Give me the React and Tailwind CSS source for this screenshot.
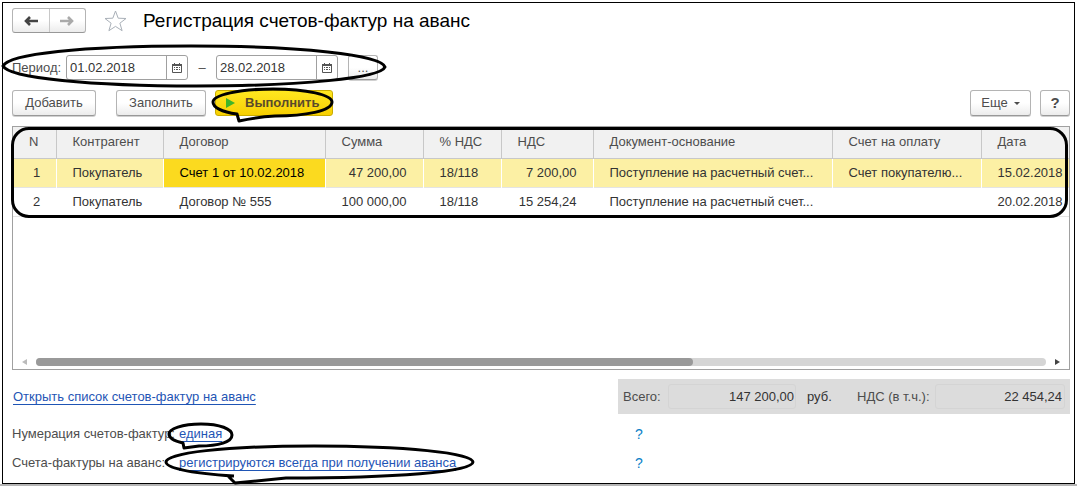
import { useState } from "react";
import clsx from "clsx";

const ROWS = [
  {
    n: 1,
    partner: "Покупатель",
    contract: "Счет 1 от 10.02.2018",
    sum: "47 200,00",
    rate: "18/118",
    vat: "7 200,00",
    base: "Поступление на расчетный счет...",
    invoice: "Счет покупателю...",
    date: "15.02.2018",
  },
  {
    n: 2,
    partner: "Покупатель",
    contract: "Договор № 555",
    sum: "100 000,00",
    rate: "18/118",
    vat: "15 254,24",
    base: "Поступление на расчетный счет...",
    invoice: "",
    date: "20.02.2018",
  },
];

const COLUMNS = [
  { key: "n", title: "N", width: "w-[43px]", align: "text-left" },
  { key: "partner", title: "Контрагент", width: "w-[107px]", align: "text-left" },
  { key: "contract", title: "Договор", width: "w-[162px]", align: "text-left" },
  { key: "sum", title: "Сумма", width: "w-[98px]", align: "text-right" },
  { key: "rate", title: "% НДС", width: "w-[78px]", align: "text-left" },
  { key: "vat", title: "НДС", width: "w-[92px]", align: "text-right" },
  { key: "base", title: "Документ-основание", width: "", align: "text-left" },
  { key: "invoice", title: "Счет на оплату", width: "w-[149px]", align: "text-left" },
  { key: "date", title: "Дата", width: "w-[88px]", align: "text-left" },
];

const buttonClass =
  "flex items-center justify-center rounded-[3px] border border-[#b4b4b4] border-b-[#989898] bg-gradient-to-b from-white from-50% to-[#ececec] text-[#4d4d4d] shadow-[0_1px_0_#d0d0d0]";

const Arrow = ({ className }) => (
  <svg width="14" height="10" viewBox="0 0 14 10" className={className} aria-hidden="true">
    <path d="M14 5H2M6 1L2 5l4 4" fill="none" stroke="currentColor" strokeWidth="2.6" />
  </svg>
);

const CalendarIcon = () => (
  <svg width="10" height="10" viewBox="0 0 10 10" aria-hidden="true">
    <path d="M0.5 1.5h9v8h-9z" fill="#fff" stroke="#555" />
    <path d="M0 1h10v2H0zM2 0h1v1H2zM7 0h1v1H7z" fill="#555" />
    <path
      d="M2 4h1v1H2zM4 4h2v1H4zM7 4h1v1H7zM2 6h1v1H2zM4 6h2v1H4zM7 6h1v1H7z"
      fill="#555"
    />
  </svg>
);

const Callout = ({ className, width, height, d }) => (
  <svg
    width={width}
    height={height}
    viewBox={`0 0 ${width} ${height}`}
    className={clsx("pointer-events-none absolute z-10 max-w-none", className)}
    aria-hidden="true"
  >
    <path d={d} fill="none" stroke="#000" strokeWidth="3" strokeLinejoin="round" />
  </svg>
);

const DateField = ({ label, value, onChange }) => (
  <div className="flex h-[25px] w-[122px] rounded-[3px] border border-[#a0a0a0] bg-white">
    <input
      type="text"
      aria-label={label}
      value={value}
      onChange={(e) => onChange(e.target.value)}
      className="min-w-0 flex-1 bg-transparent pl-[3px] text-[#333] outline-none"
    />
    <button
      type="button"
      aria-label="Выбрать дату"
      className="flex w-[21px] items-center justify-center border-l border-[#a0a0a0]"
    >
      <CalendarIcon />
    </button>
  </div>
);

const Header = () => (
  <header className="flex h-[25px] items-center">
    <div className="flex h-[25px] w-[74px] rounded-[3px] border border-[#b4b4b4] border-b-[#989898] bg-gradient-to-b from-white from-50% to-[#ececec]">
      <button
        type="button"
        aria-label="Назад"
        className="flex flex-1 items-center justify-center border-r border-[#c8c8c8] text-[#444]"
      >
        <Arrow />
      </button>
      <button
        type="button"
        aria-label="Вперед"
        className="flex flex-1 items-center justify-center text-[#aaa]"
      >
        <Arrow className="rotate-180" />
      </button>
    </div>
    <button type="button" aria-label="В избранное" className="ml-[18px]">
      <svg width="23" height="22" viewBox="0 0 23 22" aria-hidden="true">
        <path
          d="M11.5 1 L14.2 8.2 L22 8.5 L15.9 13.2 L18.1 20.7 L11.5 16.4 L4.9 20.7 L7.1 13.2 L1 8.5 L8.8 8.2 Z"
          fill="#fff"
          stroke="#a9b0b8"
        />
      </svg>
    </button>
    <h1 className="ml-4 text-[19px] leading-6 text-black">Регистрация счетов-фактур на аванс</h1>
  </header>
);

const Period = () => {
  const [from, setFrom] = useState("01.02.2018");
  const [to, setTo] = useState("28.02.2018");

  return (
    <div className="relative mt-[22px] flex h-[25px] items-center">
      <span className="w-[54px]">Период:</span>
      <DateField label="Начало периода" value={from} onChange={setFrom} />
      <span className="w-7 text-center">–</span>
      <DateField label="Конец периода" value={to} onChange={setTo} />
      <button type="button" className={clsx(buttonClass, "ml-[10px] h-[25px] w-[30px]")}>
        ...
      </button>
      <Callout
        className="-left-[11px] -top-[11px]"
        width={386}
        height={44}
        d="M2 22 C8 10 80 2 190 2 C300 2 380 11 384 23 C380 34 300 42 195 42 C90 42 8 34 2 22 Z"
      />
    </div>
  );
};

const Commands = () => (
  <div className="mt-[10px] flex h-[26px] items-stretch">
    <button type="button" className={clsx(buttonClass, "w-[84px]")}>
      Добавить
    </button>
    <button type="button" className={clsx(buttonClass, "ml-5 w-[90px]")}>
      Заполнить
    </button>
    <div className="relative ml-[9px] flex">
      <button
        type="button"
        className="flex w-[118px] items-center rounded-[3px] border border-[#c9ab00] bg-gradient-to-b from-[#ffe71f] to-[#f7cf00] pl-[10px] font-bold text-[#5a4a2a]"
      >
        <svg width="9" height="10" viewBox="0 0 9 10" className="mr-[10px]" aria-hidden="true">
          <path d="M0 0 L9 5 L0 10 Z" fill="#3fb52a" />
        </svg>
        Выполнить
      </button>
      <Callout
        className="-left-1 -top-[3px]"
        width={124}
        height={38}
        d="M26 27 C10 25 2 20 2 15 C2 8 28 2 62 2 C96 2 121 8 121 15 C121 24 94 29 64 29 Q46 30 28 34 Z"
      />
    </div>
    <button type="button" className={clsx(buttonClass, "ml-auto w-[61px] gap-[6px]")}>
      Еще
      <svg width="6" height="3" viewBox="0 0 6 3" aria-hidden="true">
        <path d="M0 0h6L3 3z" fill="#4d4d4d" />
      </svg>
    </button>
    <button
      type="button"
      className={clsx(buttonClass, "ml-[9px] w-[30px] text-[15px] font-bold")}
    >
      ?
    </button>
  </div>
);

const InvoiceTable = () => (
  <section className="relative mt-[10px] flex min-h-[244px] flex-col border border-[#a0a0a0]">
    <table className="w-full table-fixed border-collapse">
      <thead>
        <tr className="h-[31px] border-b border-[#c8c8c8] bg-[#f1f1f1] text-[#4d4d4d]">
          {COLUMNS.map((col) => (
            <th
              key={col.key}
              className={clsx(
                "border-r border-[#c8c8c8] pl-4 text-left font-normal last:border-r-0",
                col.width
              )}
            >
              {col.title}
            </th>
          ))}
        </tr>
      </thead>
      <tbody>
        {ROWS.map((row, i) => (
          <tr
            key={row.n}
            className={clsx(
              "h-[29px] border-b border-[#e4e4e4] text-[#333]",
              i === 0 && "bg-[#fcf0a4]"
            )}
          >
            {COLUMNS.map((col) => (
              <td
                key={col.key}
                className={clsx(
                  "overflow-hidden border-r border-white whitespace-nowrap last:border-r-0",
                  col.align === "text-right" ? "pr-4 text-right" : "pl-4",
                  col.key === "n" && "pl-5",
                  i === 0 && col.key === "contract" && "bg-[#fbda1f] text-black"
                )}
              >
                {row[col.key]}
              </td>
            ))}
          </tr>
        ))}
      </tbody>
    </table>
    <div className="pointer-events-none absolute -left-[2px] right-px top-0 z-10 h-[91px] rounded-[18px] border-3 border-black" />
    <div className="mt-auto mb-[3px] flex h-2 items-center px-[9px]">
      <svg width="5" height="6" viewBox="0 0 5 6" aria-hidden="true">
        <path d="M5 0v6L0 3z" fill="#bbb" />
      </svg>
      <div className="mx-[9px] h-2 flex-1 rounded-full bg-[#d5d5d5]">
        <div className="h-2 w-[65%] rounded-full bg-[#999]" />
      </div>
      <svg width="5" height="6" viewBox="0 0 5 6" aria-hidden="true">
        <path d="M0 0v6l5-3z" fill="#444" />
      </svg>
    </div>
  </section>
);

const Totals = () => (
  <div className="flex h-[35px] w-[452px] items-center bg-[#dcdcdc] px-[5px]">
    <label htmlFor="total" className="w-[45px]">
      Всего:
    </label>
    <input
      id="total"
      readOnly
      value="147 200,00"
      className="h-[25px] w-32 rounded-[3px] border border-[#d4d4d4] pr-px text-right text-[#333] outline-none"
    />
    <span className="ml-[11px] text-[#333]">руб.</span>
    <label htmlFor="vat" className="ml-auto w-[78px]">
      НДС (в т.ч.):
    </label>
    <input
      id="vat"
      readOnly
      value="22 454,24"
      className="h-[25px] w-[130px] rounded-[3px] border border-[#d4d4d4] pr-[2px] text-right text-[#333] outline-none"
    />
  </div>
);

const linkClass =
  "text-[#1f55b5] underline decoration-1 underline-offset-3 [text-decoration-skip-ink:none]";

const Setting = ({ label, value, children }) => (
  <div className="flex h-[29px] items-center">
    <span className="w-[167px] whitespace-nowrap">{label}</span>
    <div className="relative flex w-[456px]">
      <a href="#" className={linkClass}>
        {value}
      </a>
      {children}
    </div>
    <button type="button" aria-label="Справка" className="text-sm leading-4 text-[#0b7fc7]">
      ?
    </button>
  </div>
);

export default function App() {
  return (
    <div className="bg-white pt-[2px] font-['Liberation_Sans',Arial,sans-serif] text-[13px] leading-4 text-[#4d4d4d]">
      <main className="mx-[2px] border border-black pt-[5px] pr-1 pb-[6px] pl-[9px]">
        <Header />
        <Period />
        <Commands />
        <InvoiceTable />
        <div className="mt-[9px] flex items-center justify-between">
          <a href="#" className={clsx(linkClass, "ml-px")}>
            Открыть список счетов-фактур на аванс
          </a>
          <Totals />
        </div>
        <div className="mt-[5px]">
          <Setting label="Нумерация счетов-фактур:" value="единая">
            <Callout
              className="-left-[12px] -top-[4px]"
              width={68}
              height={30}
              d="M16 21 C7 19 2 16 2 12 C2 7 15 2 34 2 C53 2 65 7 65 13 C65 20 52 24 32 24 L17 26 Z"
            />
          </Setting>
          <Setting label="Счета-фактуры на аванс:" value="регистрируются всегда при получении аванса">
            <Callout
              className="-left-[15px] -top-[11px]"
              width={312}
              height={42}
              d="M70 32 C25 29 2 24 2 18 C2 9 60 2 150 2 C240 2 309 9 309 18 C309 28 230 34 122 34 L71 39 L64 32"
            />
          </Setting>
        </div>
      </main>
      <div className="h-[2px] bg-[#b5b5b5]" />
    </div>
  );
}
